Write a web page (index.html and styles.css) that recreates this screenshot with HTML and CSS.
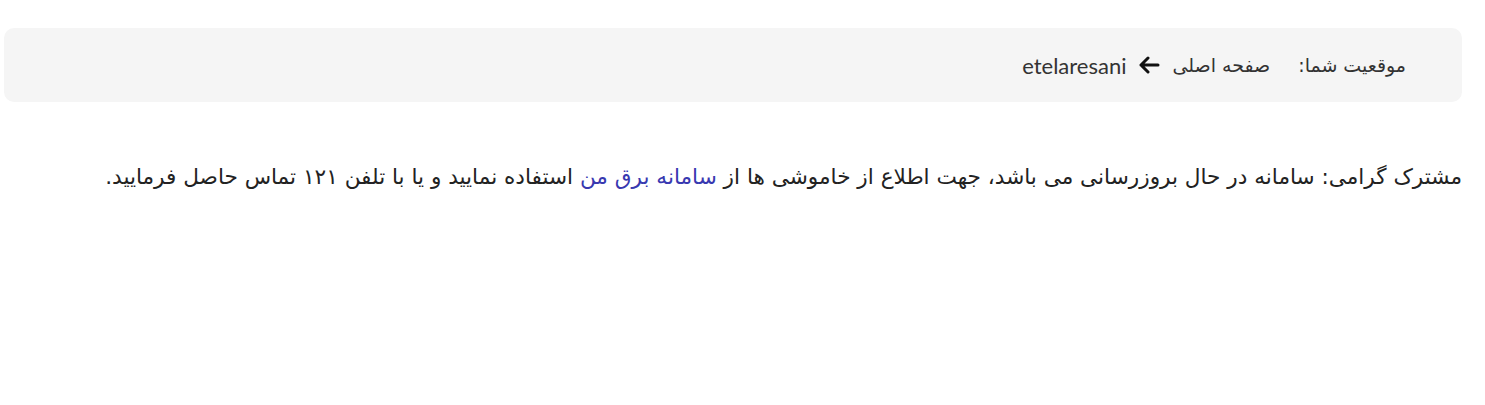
FILE: index.html
```
<!DOCTYPE html>
<html lang="fa" dir="rtl">
<head>
<meta charset="utf-8">
<link rel="stylesheet" href="styles.css">
</head>
<body>
<div class="page">
  <nav class="crumbs">
    <span class="label">موقعیت شما:</span>
    <a class="crumb" href="#">صفحه اصلی</a>
    <svg class="arrow" width="22" height="18" viewBox="0 0 22 18"><path d="M20 9H3M10 2L3 9l7 7" fill="none" stroke="#111" stroke-width="3" stroke-linecap="round" stroke-linejoin="round"/></svg>
    <span class="crumb latin">etelaresani</span>
  </nav>
  <p class="notice">مشترک گرامی: سامانه در حال بروزرسانی می باشد، جهت اطلاع از خاموشی ها از <a href="#" class="link">سامانه برق من</a> استفاده نمایید و یا با تلفن ۱۲۱ تماس حاصل فرمایید.</p>
</div>
</body>
</html>
```
FILE: styles.css
```
html, body { margin: 0; padding: 0; background: #fff; }
body { font-family: "DejaVu Sans", "Noto Sans", sans-serif; color: #222; }
.page { padding: 28px 23px 0 4px; }
.crumbs {
  display: flex; align-items: center; gap: 12px;
  background: #f5f5f5; border-radius: 10px;
  height: 74px; padding: 0 56px; box-sizing: border-box;
  font-size: 19px; color: #333;
}
.label { margin-left: 16px; }
.crumb { color: #333; text-decoration: none; }
.latin { font-family: "Lato", "Liberation Sans", sans-serif; font-size: 22px; }
.arrow { display: block; }
.notice { margin: 60px 0 0 0; font-size: 21.6px; line-height: 30px; color: #222; }
.link { color: #3838b0; text-decoration: none; }
```
